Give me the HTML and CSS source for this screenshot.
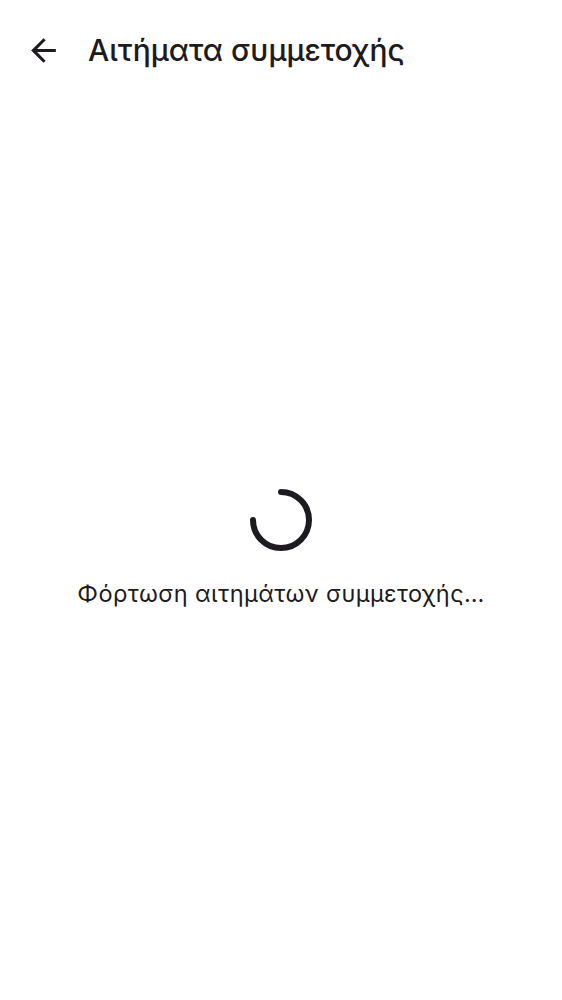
FILE: index.html
```html
<!DOCTYPE html>
<html lang="el">
<head>
<meta charset="utf-8">
<link rel="stylesheet" href="styles.css">
</head>
<body>
<div class="screen">
  <header class="topbar">
    <button class="back" aria-label="Πίσω">
      <svg viewBox="0 0 24 24" width="37" height="37"><path d="M20 11H7.83l5.59-5.59L12 4l-8 8 8 8 1.41-1.41L7.83 13H20v-2z" fill="#1d1b20"/></svg>
    </button>
    <h1 class="title">Αιτήματα συμμετοχής</h1>
  </header>
  <main class="loading">
    <svg class="spinner" viewBox="0 0 64 64" width="64" height="64">
      <path d="M32 4 A28 28 0 1 1 4 32" fill="none" stroke="#1d1b20" stroke-width="6" stroke-linecap="round"/>
    </svg>
    <p class="msg">Φόρτωση αιτημάτων συμμετοχής…</p>
  </main>
</div>
</body>
</html>
```
FILE: styles.css
```css
html, body {
  margin: 0;
  padding: 0;
  background: #ffffff;
}
body {
  font-family: Inter, "Noto Sans", sans-serif;
  color: #1d1b20;
}
.screen {
  width: 562px;
  height: 1000px;
  display: flex;
  flex-direction: column;
}
.topbar {
  display: flex;
  align-items: center;
  height: 100px;
  padding-left: 25px;
}
.back {
  border: 0;
  background: none;
  padding: 0;
  width: 37px;
  height: 37px;
  display: flex;
  align-items: center;
  justify-content: center;
}
.title {
  margin: 0 0 0 26px;
  font-size: 30px;
  font-weight: 500;
  letter-spacing: 0;
}
.loading {
  flex: 1;
  display: flex;
  flex-direction: column;
  align-items: center;
  padding-top: 388px;
}
.spinner {
  display: block;
}
.msg {
  margin: 27px 0 0;
  font-size: 23.5px;
  letter-spacing: 0.4px;
}
```
